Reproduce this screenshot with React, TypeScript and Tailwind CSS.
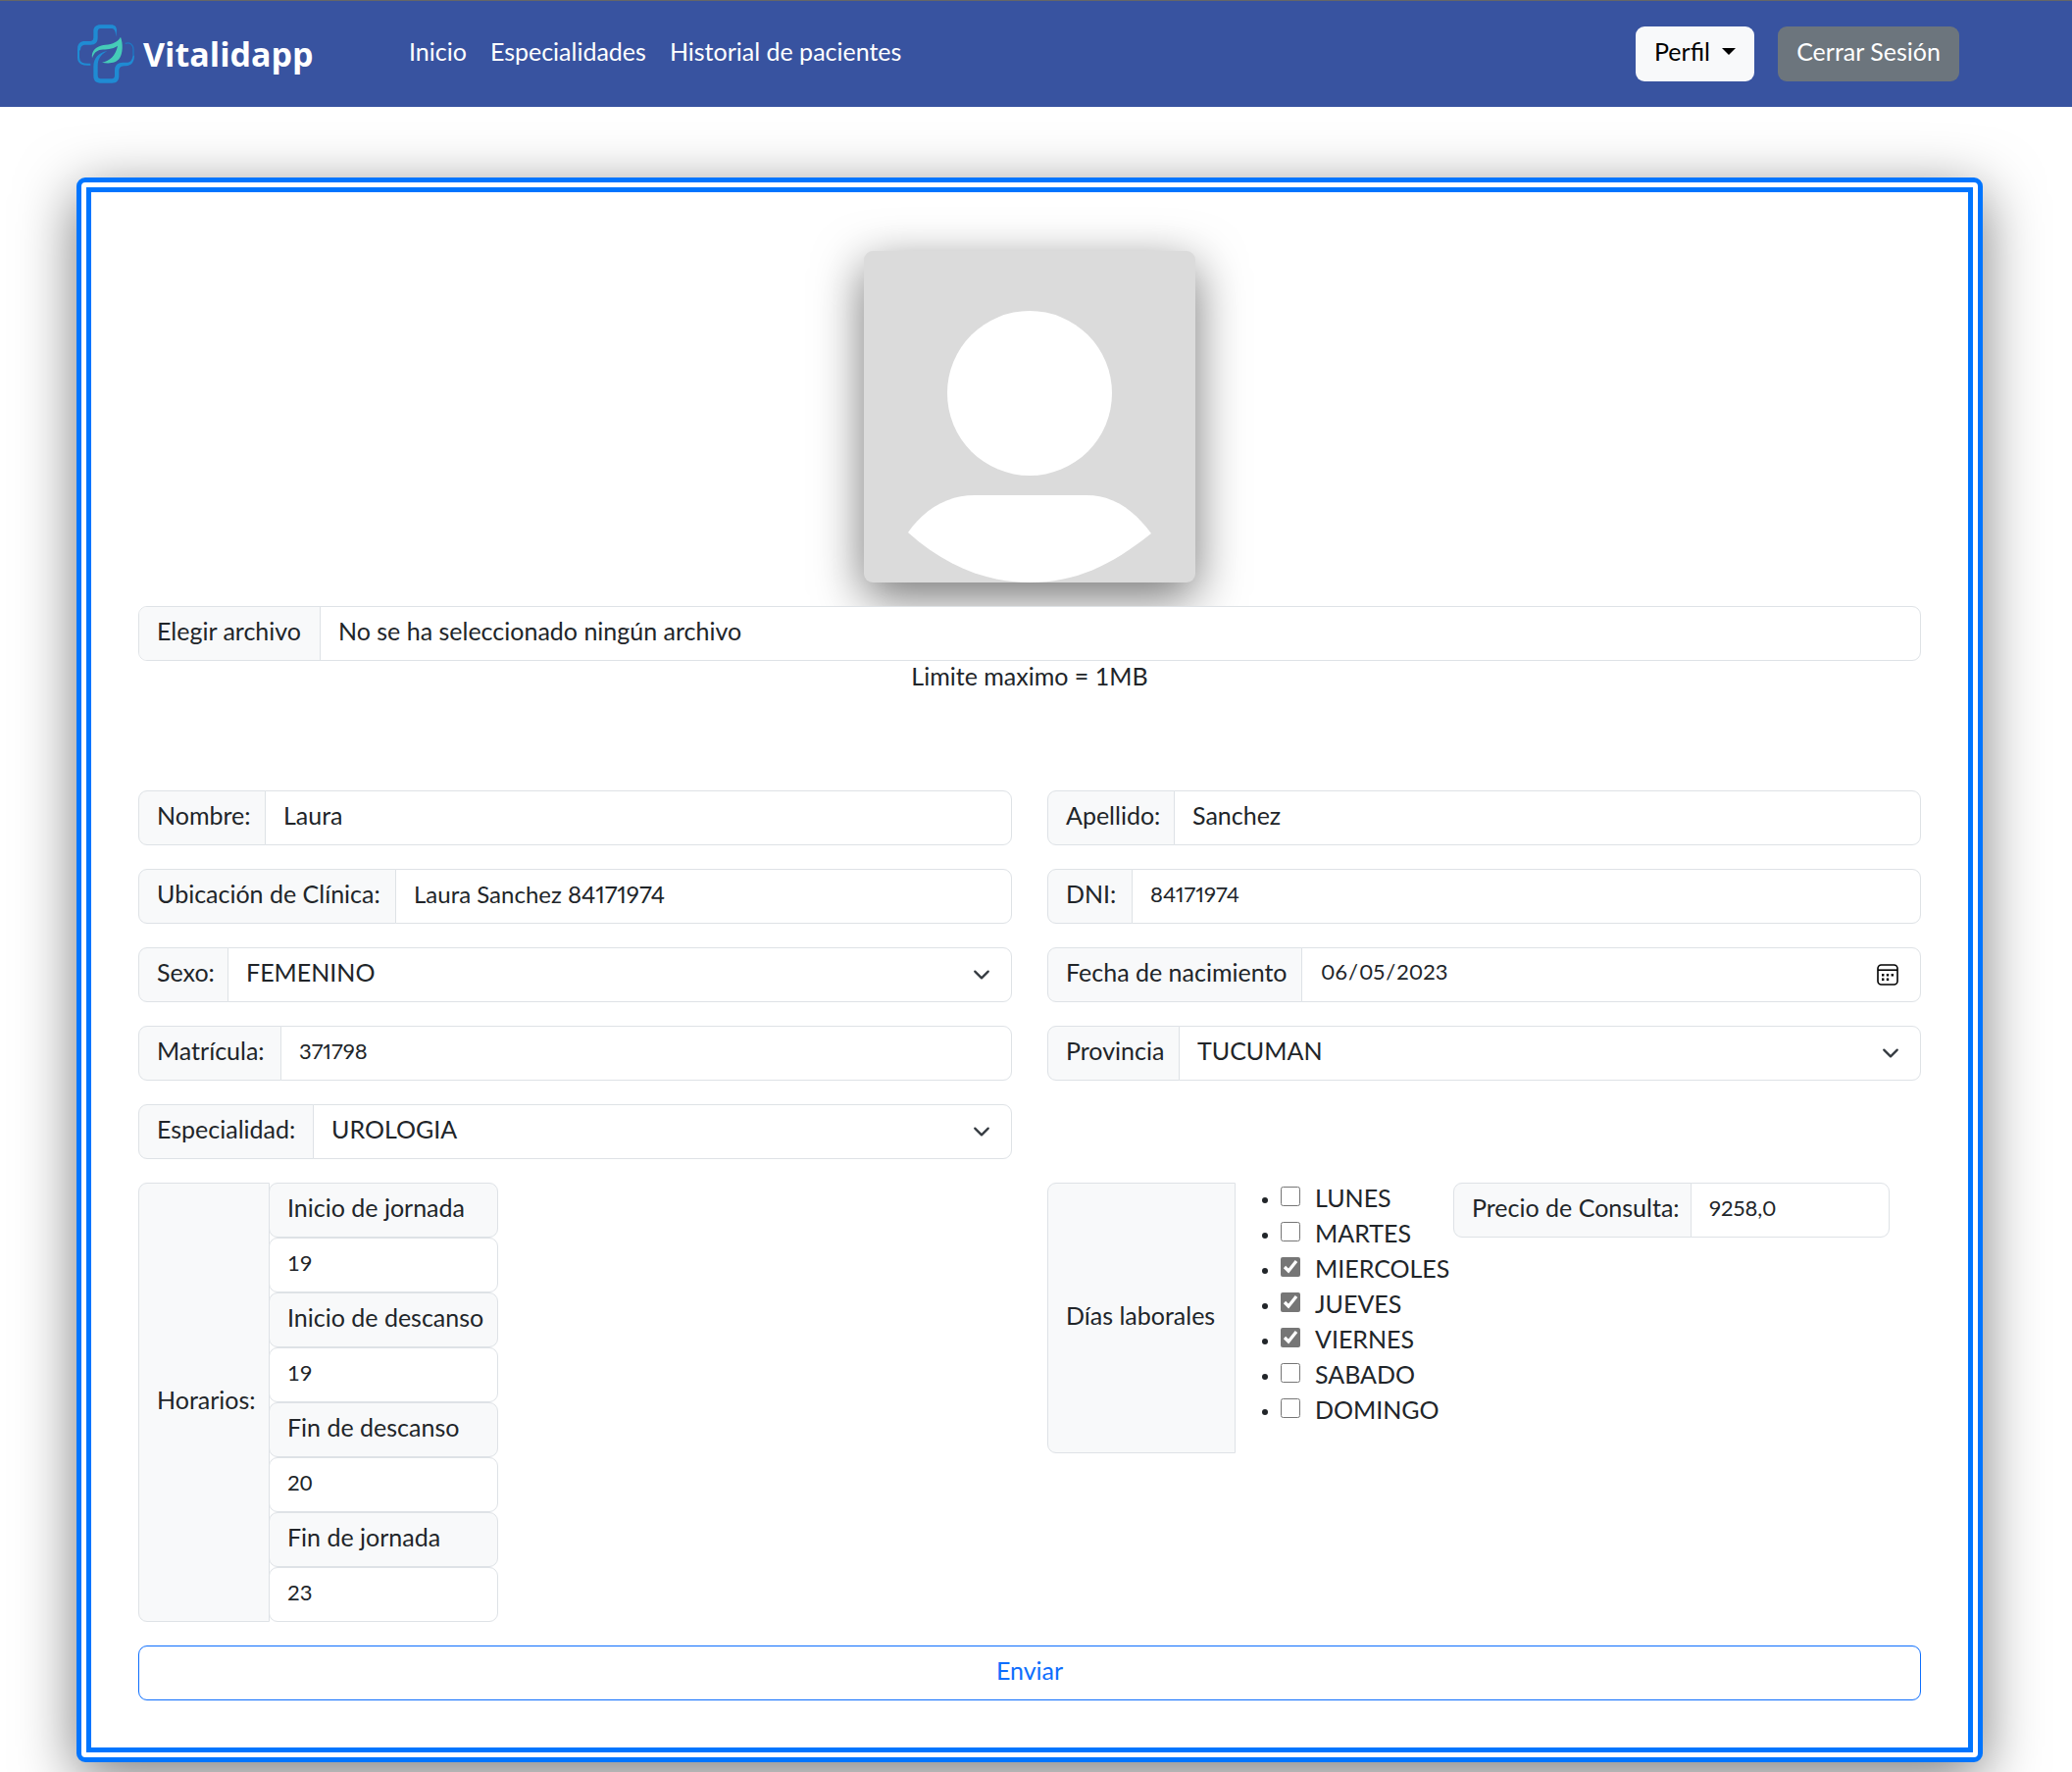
import React, { useState } from 'react';
import type { ReactNode } from 'react';

const days = [
  { name: 'LUNES', on: false },
  { name: 'MARTES', on: false },
  { name: 'MIERCOLES', on: true },
  { name: 'JUEVES', on: true },
  { name: 'VIERNES', on: true },
  { name: 'SABADO', on: false },
  { name: 'DOMINGO', on: false },
];

const schedule = [
  { id: 'inicio-jornada', label: 'Inicio de jornada', value: '19' },
  { id: 'inicio-descanso', label: 'Inicio de descanso', value: '19' },
  { id: 'fin-descanso', label: 'Fin de descanso', value: '20' },
  { id: 'fin-jornada', label: 'Fin de jornada', value: '23' },
];

const labelBase =
  'flex shrink-0 items-center whitespace-nowrap rounded-l-[9px] border border-[#dee2e6] bg-[#f8f9fa] pb-1.5 pl-[18px]';
const inputBase =
  '-ml-px h-14 w-full min-w-0 flex-1 rounded-r-[9px] border border-[#dee2e6] bg-white pb-1.5 pl-[18px] proportional-nums outline-none focus:border-[#86b7fe]';

function Logo() {
  return (
    <svg className="h-[60px] w-[59px] shrink-0" viewBox="54 44 177 180" fill="none" aria-hidden="true">
      <path
        d="M97 166C85 167 77 167 70 163C62 158 60 153 60 145V122C60 105 66 99 82 99H95C108 99 112 95 112 82V66C112 54 118 49 129 49H158"
        stroke="#1f8bd3"
        strokeWidth="6"
      />
      <path
        d="M58 128V115C58 102 66 95 80 95H93C103 95 106 91 106 82V64C106 52 114 45 127 45H160C172 45 177 52 177 62L175 82C174 68 172 57 162 56H130C121 56 119 60 119 68V84C119 99 112 106 98 106H83C71 106 67 110 66 122Z"
        fill="#1f8bd3"
      />
      <path d="M203 102C218 98 228 105 228 120V144" stroke="#1f78c4" strokeWidth="4" />
      <path
        d="M231 138C231 158 223 170 205 171C191 171 184 174 184 187V200C184 216 177 223 163 223H127C112 223 106 215 106 201V172C106 148 122 129 148 126C127 136 119 150 119 172V198C119 207 122 210 131 210H160C169 210 171 206 171 197V184C171 168 180 160 196 160H206C218 160 223 155 226 142Z"
        fill="#1f8bd3"
      />
      <path
        d="M102 147C98 124 115 109 142 106C166 104 181 96 189 82C197 103 196 130 186 147C176 163 151 165 132 160C157 155 173 140 180 109C163 121 145 119 129 121C115 123 107 131 102 147Z"
        fill="#45cbb8"
      />
    </svg>
  );
}

function Avatar() {
  return (
    <svg
      viewBox="0 0 338 338"
      className="size-[338px] rounded-[9px] bg-[#dbdbdb] shadow-[0_15px_50px_rgba(0,0,0,0.55)]"
      role="img"
      aria-label="Foto de perfil"
    >
      <circle cx="169" cy="145" r="84" fill="#fff" />
      <path
        d="M45 287C61 264 84 249 113 249H227C255 249 276 265 293 288C252 321 215 338 169 338C125 338 83 321 45 287Z"
        fill="#fff"
      />
    </svg>
  );
}

function Group({ id, label, width, children }: { id: string; label: string; width: string; children: ReactNode }) {
  return (
    <div className="flex h-14">
      <label htmlFor={id} className={`${labelBase} ${width}`}>
        {label}
      </label>
      {children}
    </div>
  );
}

function TextField({
  id,
  label,
  width,
  value,
  size = 'text-[25px]',
}: {
  id: string;
  label: string;
  width: string;
  value: string;
  size?: string;
}) {
  return (
    <Group id={id} label={label} width={width}>
      <input id={id} type="text" defaultValue={value} className={`${inputBase} ${size}`} />
    </Group>
  );
}

function SelectField({ id, label, width, value }: { id: string; label: string; width: string; value: string }) {
  return (
    <Group id={id} label={label} width={width}>
      <div className="relative flex min-w-0 flex-1">
        <select id={id} defaultValue={value} className={`${inputBase} appearance-none`}>
          <option>{value}</option>
        </select>
        <svg
          className="pointer-events-none absolute top-[19px] right-[22px] size-[18px]"
          viewBox="0 0 16 16"
          fill="none"
          stroke="#343a40"
          strokeWidth="2"
          strokeLinecap="round"
          strokeLinejoin="round"
          aria-hidden="true"
        >
          <path d="m2 5 6 6 6-6" />
        </svg>
      </div>
    </Group>
  );
}

function DateField() {
  return (
    <Group id="nacimiento" label="Fecha de nacimiento" width="w-[260px]">
      <div className="relative flex min-w-0 flex-1">
        <input
          id="nacimiento"
          type="date"
          defaultValue="2023-06-05"
          className={`${inputBase} pr-[18px] text-[22px] [&::-webkit-calendar-picker-indicator]:opacity-0`}
        />
        <svg
          className="pointer-events-none absolute top-[17px] right-[23px] size-[22px]"
          viewBox="0 0 22 22"
          fill="none"
          stroke="#000"
          strokeWidth="1.6"
          aria-hidden="true"
        >
          <rect x="1" y="1" width="20" height="20" rx="3.5" />
          <path d="M1 6.2h20" />
          <path
            d="M5 10h2.4v2.4H5zM9.8 10h2.4v2.4H9.8zM14.6 10H17v2.4h-2.4zM5 14.6h2.4V17H5zM9.8 14.6h2.4V17H9.8z"
            fill="#000"
            stroke="none"
          />
        </svg>
      </div>
    </Group>
  );
}

export default function App() {
  const [fileName, setFileName] = useState('No se ha seleccionado ningún archivo');

  return (
    <div className="bg-white pb-[10px] font-[Lato,sans-serif] text-[25px] leading-9 text-[#212529]">
      <header className="border-t border-[#666] bg-[#3853a0] pr-[13px]">
        <div className="mx-auto flex h-[108px] max-w-[1944px] items-center pr-6">
          <a href="#inicio" className="flex w-[339px] shrink-0 items-center gap-[9px] text-white">
            <Logo />
            <span className="font-['Open_Sans',sans-serif] text-[34px] font-bold">Vitalidapp</span>
          </a>
          <nav className="flex gap-6 pb-1.5 whitespace-nowrap text-white">
            <a href="#inicio">Inicio</a>
            <a href="#especialidades">Especialidades</a>
            <a href="#historial">Historial de pacientes</a>
          </nav>
          <div className="ml-auto flex gap-6 whitespace-nowrap">
            <button
              type="button"
              className="flex h-14 w-[121px] items-center justify-between rounded-[9px] bg-[#f8f9fa] px-[19px] pb-1.5 text-black"
            >
              Perfil
              <svg className="h-[7px] w-[14px]" viewBox="0 0 14 7" aria-hidden="true">
                <path d="M0 0h14L7 7z" />
              </svg>
            </button>
            <button type="button" className="h-14 w-[185px] rounded-[9px] bg-[#6c757d] pb-1.5 text-white">
              Cerrar Sesión
            </button>
          </div>
        </div>
      </header>

      <main className="pt-[72px] pr-[13px]">
        <form
          onSubmit={(e) => e.preventDefault()}
          className="mx-auto max-w-[1944px] rounded-[9px] border-[15px] border-double border-[#0075ff] bg-white px-12 pt-[60px] pb-12 shadow-[0_15px_60px_rgba(0,0,0,0.52)]"
        >
          <div className="flex flex-col items-center">
            <Avatar />
            <label className="relative mt-6 flex h-14 w-full cursor-pointer overflow-hidden rounded-[9px] border border-[#dee2e6] bg-white">
              <input
                type="file"
                className="sr-only"
                onChange={(e) => setFileName(e.target.files?.[0]?.name ?? 'No se ha seleccionado ningún archivo')}
              />
              <span className="flex w-[185px] items-center border-r border-[#dee2e6] bg-[#f8f9fa] pb-1.5 pl-[18px] whitespace-nowrap">
                Elegir archivo
              </span>
              <span className="flex items-center pb-1.5 pl-[18px]">{fileName}</span>
            </label>
            <p className="pb-1.5 leading-[30px]">Limite maximo = 1MB</p>
          </div>

          <div className="mt-24 grid grid-cols-2 gap-x-9 gap-y-6">
            <TextField id="nombre" label="Nombre:" width="w-[130px]" value="Laura" />
            <TextField id="apellido" label="Apellido:" width="w-[130px]" value="Sanchez" />
            <TextField
              id="ubicacion"
              label="Ubicación de Clínica:"
              width="w-[263px]"
              value="Laura Sanchez 84171974"
              size="text-[24px]"
            />
            <TextField id="dni" label="DNI:" width="w-[87px]" value="84171974" size="text-[22px]" />
            <SelectField id="sexo" label="Sexo:" width="w-[92px]" value="FEMENINO" />
            <DateField />
            <TextField id="matricula" label="Matrícula:" width="w-[146px]" value="371798" size="text-[22px]" />
            <SelectField id="provincia" label="Provincia" width="w-[135px]" value="TUCUMAN" />
            <SelectField id="especialidad" label="Especialidad:" width="w-[179px]" value="UROLOGIA" />

            <div className="col-start-1 flex">
              <div className={`${labelBase} w-[134px]`}>Horarios:</div>
              <div className="-ml-px flex w-[234px] flex-col">
                {schedule.map((s) => (
                  <React.Fragment key={s.id}>
                    <label
                      htmlFor={s.id}
                      className="flex h-14 items-center rounded-[9px] border border-[#dee2e6] bg-[#f8f9fa] pb-1.5 pl-[18px] whitespace-nowrap"
                    >
                      {s.label}
                    </label>
                    <input
                      id={s.id}
                      type="text"
                      defaultValue={s.value}
                      className="h-14 w-full rounded-[9px] border border-[#dee2e6] bg-white pb-1.5 pl-[18px] text-[22px] outline-none"
                    />
                  </React.Fragment>
                ))}
              </div>
            </div>

            <div className="flex items-start">
              <div className={`${labelBase} h-[276px] w-[192px]`}>Días laborales</div>
              <ul className="w-[222px] shrink-0 pl-[27px]">
                {days.map((d) => (
                  <li key={d.name} className="flex h-9 items-center whitespace-nowrap">
                    <span className="mr-[13px] size-[6px] shrink-0 rounded-full bg-[#212529]" />
                    <label className="flex items-center gap-[15px] pb-1.5">
                      <input type="checkbox" defaultChecked={d.on} className="mb-0.5 size-5 shrink-0 accent-[#767676]" />
                      {d.name}
                    </label>
                  </li>
                ))}
              </ul>
              <div className="flex h-14 w-[445px]">
                <label htmlFor="precio" className={`${labelBase} w-[243px]`}>
                  Precio de Consulta:
                </label>
                <input id="precio" type="text" defaultValue="9258,0" className={`${inputBase} text-[22px]`} />
              </div>
            </div>
          </div>

          <button
            type="submit"
            className="mt-6 block h-14 w-full rounded-[9px] border border-[#0d6efd] bg-white pb-1.5 text-[#0d6efd]"
          >
            Enviar
          </button>
        </form>
      </main>
    </div>
  );
}
